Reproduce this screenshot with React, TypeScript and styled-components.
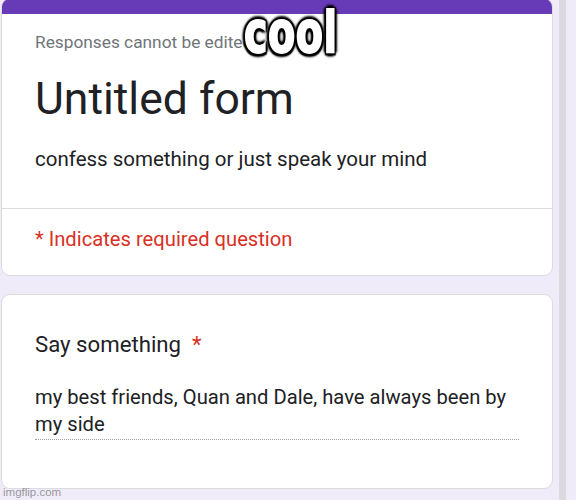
import styled, {createGlobalStyle} from "styled-components";

const GlobalStyle = createGlobalStyle`
  html, body {
    margin: 0;
    padding: 0;
    background: #f0ebf8;
    overflow: hidden;
  }
  body {
    font-family: Roboto, "Noto Sans", sans-serif;
    color: #202124;
  }
`;

const Page = styled.div`
  position: relative;
  width: 576px;
  height: 500px;
  display: flex;
  overflow: hidden;
`;

const Column = styled.main`
  width: 552px;
  margin-left: 1px;
  margin-right: 6px;
  display: flex;
  flex-direction: column;
  gap: 18px;
`;

const Rail = styled.div`
  width: 7px;
  background: #dcdae0;
`;

const Card = styled.section<{ $offset?: number }>`
  background: #fff;
  border: 1px solid #dadce0;
  border-radius: 9px;
  overflow: hidden;
  margin-top: ${p => p.$offset ?? 0}px;
`;

const TopBar = styled.div`
  height: 15px;
  background: #673ab7;
`;

const Block = styled.div<{ $pt: number; $pb: number }>`
  padding: ${p => p.$pt}px 35px ${p => p.$pb}px 33px;
  display: flex;
  flex-direction: column;
`;

const Notice = styled.div`
  font-size: 17.3px;
  line-height: 20px;
  color: #70757a;
`;

const Title = styled.h1`
  margin: 21px 0 0;
  font-size: 44.5px;
  font-weight: 400;
  line-height: 52px;
  color: #202124;
`;

const Description = styled.p`
  margin: 21px 0 0;
  font-size: 20.5px;
  line-height: 26px;
  color: #202124;
`;

const Divider = styled.hr`
  margin: 0;
  border: none;
  border-top: 1px solid #dadce0;
`;

const Required = styled.p`
  margin: 0;
  font-size: 20.2px;
  line-height: 26px;
  color: #d93025;
`;

const Question = styled.h2`
  margin: 0;
  font-size: 22.2px;
  font-weight: 400;
  line-height: 28px;
  color: #202124;
`;

const Star = styled.span`
  color: #d93025;
  margin-left: 11px;
`;

const Answer = styled.div`
  margin-top: 26px;
  width: 484px;
  font-size: 20.2px;
  line-height: 27px;
  color: #202124;
  border-bottom: 1px dotted #9aa0a6;
  padding-bottom: 1px;
`;

// meme caption laid over the form, Impact-ish look from what's installed
const Caption = styled.div`
  position: absolute;
  left: 244px;
  top: -5px;
  font-family: "DejaVu Sans Condensed", "Liberation Sans Narrow", sans-serif;
  font-weight: 700;
  font-size: 45px;
  line-height: 60px;
  letter-spacing: 0.5px;
  color: #fff;
  -webkit-text-stroke: 1.4px #fff;
  transform: scale(0.98, 1.27);
  transform-origin: top left;
  text-shadow:
    0 0 2px #000, 0 0 4px #000,
    2px 2px 1px #000, -2px -2px 1px #000, 2px -2px 1px #000, -2px 2px 1px #000,
    3px 0 2px #000, -3px 0 2px #000, 0 3px 2px #000, 0 -3px 2px #000;
`;

const Watermark = styled.div`
  position: absolute;
  left: 3px;
  bottom: 2px;
  font-family: "Liberation Sans", Arial, sans-serif;
  font-size: 11.5px;
  color: rgba(120, 120, 120, 0.75);
`;

export default function App() {
  return (
    <>
      <GlobalStyle/>
      <Page>
        <Column>
          <Card $offset={-2}>
            <TopBar/>
            <Block $pt={18} $pb={36}>
              <Notice>Responses cannot be edited</Notice>
              <Title>Untitled form</Title>
              <Description>confess something or just speak your mind</Description>
            </Block>
            <Divider/>
            <Block $pt={17} $pb={23}>
              <Required>* Indicates required question</Required>
            </Block>
          </Card>
          <Card>
            <Block $pt={35} $pb={48}>
              <Question>Say something<Star>*</Star></Question>
              <Answer>my best friends, Quan and Dale, have always been by my side</Answer>
            </Block>
          </Card>
        </Column>
        <Rail/>
        <Caption>cool</Caption>
        <Watermark>imgflip.com</Watermark>
      </Page>
    </>
  );
}
